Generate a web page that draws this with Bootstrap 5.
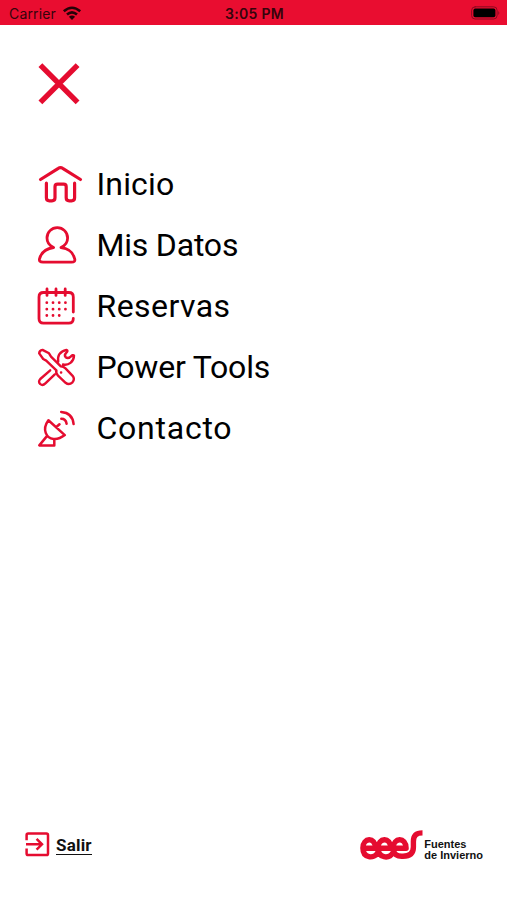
<!DOCTYPE html>
<html lang="es">
<head>
<meta charset="utf-8">
<meta name="viewport" content="width=device-width, initial-scale=1">
<title>Menú</title>
<link href="https://cdn.jsdelivr.net/npm/bootstrap@5.3.0/dist/css/bootstrap.min.css" rel="stylesheet">
<style>
body{font-family:Roboto,"Liberation Sans",sans-serif;color:#000;background:#fff}
svg{display:block;flex:none;fill:none;stroke:#e50c30;stroke-linecap:round;stroke-linejoin:round}
.status{height:25px;background:#e90d30;color:#35040b;font:14px/25px Inter,sans-serif;padding:1px 7px 0 9px}
.status svg{stroke:none;fill:#250207}
.carrier{letter-spacing:.15px;gap:6px}
.status-time{font-weight:600;font-size:14px;letter-spacing:.3px}
.close-btn{margin:38px 0 0 38px;width:42px;height:42px}
.menu{margin-top:49px;padding-left:34px}
.menu a{height:61px;color:#000;font-size:32px;line-height:61px;gap:10.5px}
.menu svg{margin-bottom:2px}
.tight{letter-spacing:-.2px}
.mid{letter-spacing:.15px}
.loose{letter-spacing:.45px}
.wide{letter-spacing:.75px}
.foot{padding:0 24px 39px 25px}
.exit{color:#111;font-size:17px;font-weight:700;line-height:24px;gap:6px;letter-spacing:.2px}
.exit svg{margin-bottom:2px}
.exit span{border-bottom:1.5px solid #111;line-height:17px}
.brand{font:700 11px/11px "Liberation Sans",sans-serif;color:#111;gap:1px}
.brand svg{margin-bottom:1px}
</style>
<script src="https://cdn.jsdelivr.net/npm/bootstrap@5.3.0/dist/js/bootstrap.bundle.min.js"></script>
</head>
<body>
<div class="d-flex flex-column vh-100">
<header class="status row g-0 flex-nowrap">
  <div class="carrier col d-flex align-items-center"><span>Carrier</span>
    <svg width="20" height="15" viewBox="0 0 20 15"><g style="fill:none;stroke:#250207;stroke-width:2.6;stroke-linecap:butt"><path d="M1.8 5.3Q10-1.8 18.2 5.3M5 8.6Q10 4.2 15 8.6"/></g><path d="M6.9 10.7Q10 8.3 13.1 10.7L10 14Z"/></svg></div>
  <div class="col-auto status-time">3:05 PM</div>
  <div class="col d-flex align-items-center justify-content-end"><svg width="29" height="14" viewBox="0 0 29 14"><rect x=".6" y=".8" width="25.5" height="12.2" rx="3.5" fill="none" stroke="#8b0a20"/><rect x="2.4" y="2.6" width="22" height="8.7" rx="1.8" fill="#000"/><path d="M27.3 5Q29.3 7 27.3 9Z" fill="#8b0a20"/></svg></div>
</header>
<main class="flex-grow-1">
  <button class="close-btn btn p-0 border-0 d-block" aria-label="Cerrar"><svg width="42" height="42" viewBox="0 0 42 42" stroke-width="5.4" style="stroke-linecap:butt"><path d="M2.4 2.2 39.6 39.4M39.6 2.2 2.4 39.4"/></svg></button>
  <nav class="menu d-flex flex-column">
    <a href="#" class="d-flex align-items-center text-decoration-none"><svg width="52" height="52" viewBox="0 0 52 52" stroke-width="3.2"><path d="M6.5 21.5 24.3 10.3Q26.5 8.8 28.7 10.3L46.5 21.5M12.4 25.2V39.8Q12.4 42.8 15.4 42.8H18Q21 42.8 21 39.8V28.8Q21 26.2 23.6 26.2H29.6Q32.2 26.2 32.2 28.8V39.8Q32.2 42.8 35.2 42.8H37.6Q40.6 42.8 40.6 39.8V25.2"/></svg><span class="mid">Inicio</span></a>
    <a href="#" class="d-flex align-items-center text-decoration-none"><svg width="52" height="52" viewBox="0 0 52 52" stroke-width="2.8"><path d="M19.6 28.5C15.5 26.5 13 23 13 18.9A10.3 10.3 0 0 1 33.6 18.9C33.6 23 31 26.5 27 28.5C34 29.5 38.5 32 40.7 39.8C41.3 42 40.3 43.2 37.5 43.2H9C6 43.2 5 42 5.5 39.8C7.5 32 12.5 29.5 19.6 28.5Z"/></svg><span class="tight">Mis Datos</span></a>
    <a href="#" class="d-flex align-items-center text-decoration-none"><svg width="52" height="52" viewBox="0 0 52 52" stroke-width="2.8"><path d="M39.3 32V17Q39.3 12.5 34.8 12.5H9.5Q5 12.5 5 17V38.5Q5 43.2 9.5 43.2H34.8Q39.3 43.2 39.3 38.5M13 9V15.4M22 9V15.4M31.2 9V15.4"/><path d="M12.8 22.7h.01m6.2 0h.01m6.2 0h.01m6.2 0h.01M12.8 29.2h.01m6.2 0h.01m6.2 0h.01m6.2 0h.01M12.8 35.5h.01m6.2 0h.01m6.2 0h.01"/></svg><span class="loose">Reservas</span></a>
    <a href="#" class="d-flex align-items-center text-decoration-none"><svg width="52" height="52" viewBox="0 0 52 52" stroke-width="2.4"><path d="M5.2 12.4Q5.3 9.3 8.5 8.9L15 12.3 17 15.6 26.8 25.4Q29.5 25.4 31.5 27.4L38.6 34.8Q41.2 38.2 38.5 41.3Q35 44.6 31.6 41.8L24 34.6Q21.6 32 22.4 29.4L12.2 19.6 9.2 18ZM27 31.5h.2M16.2 29.3 6.3 38Q3.8 40.8 6.3 43Q8.6 45.2 11.4 42.4L20.8 33.4M24.2 20.6Q22.9 11.2 32.4 8.9Q34.4 9.4 32.6 11.4Q29.7 14 31.7 16.3Q34 18.2 36.7 15.6Q39 13.4 40 14.6C39.8 21 34.5 24.7 29 23.5"/></svg><span class="tight">Power Tools</span></a>
    <a href="#" class="d-flex align-items-center text-decoration-none"><svg width="52" height="52" viewBox="0 0 52 52" stroke-width="2.5"><path d="M14.4 18.3 30.8 33.1Q25 37.6 19.5 37C12.5 36.2 7.5 27.8 14.4 18.3ZM22 25.2 25.5 22.2M12.5 34.6 5.3 43.4H20.3V37.2"/><path d="M27.3 16.8Q31.8 16.8 32.6 21.7M27.2 9.9Q38.5 10.6 39.6 22.1"/></svg><span class="wide">Contacto</span></a>
  </nav>
</main>
<footer class="foot d-flex justify-content-between align-items-center">
  <a href="#" class="exit d-flex align-items-center text-decoration-none"><svg width="25" height="25" viewBox="0 0 25 25" stroke-width="2.5" style="stroke-linecap:butt;stroke-linejoin:miter"><path d="M1.6 8.2V3.2Q1.6 1.6 3.2 1.6H21.4Q23 1.6 23 3.2V21.4Q23 23 21.4 23H3.2Q1.6 23 1.6 21.4V16.4M1 12.3H17M11.6 6.9 17 12.3 11.6 17.7"/></svg><span>Salir</span></a>
  <div class="brand d-flex align-items-center">
    <svg width="63" height="30" viewBox="0 0 63 30" stroke-width="5.4" style="stroke-linecap:butt"><path d="M4 18.3H15.6C15.4 6.6 2.9 7.4 2.9 18.1C2.9 28.4 14 29.4 18 22.3M19 18.3H30.9C30.7 6.6 18 7.4 18 18.1C18 28.4 29 29.4 33.2 22.3M34.3 18.3H46.1C46 6.6 33.2 7.4 33.2 18.1C33.2 24.8 37.5 26.6 43 26.2C50 26.2 53.4 22.8 53.4 17V11.5C53.4 5.5 56 2.9 62.5 2.9"/></svg>
    <div class="pt-2">Fuentes<br>de Invierno</div>
  </div>
</footer>
</div>
</body>
</html>
